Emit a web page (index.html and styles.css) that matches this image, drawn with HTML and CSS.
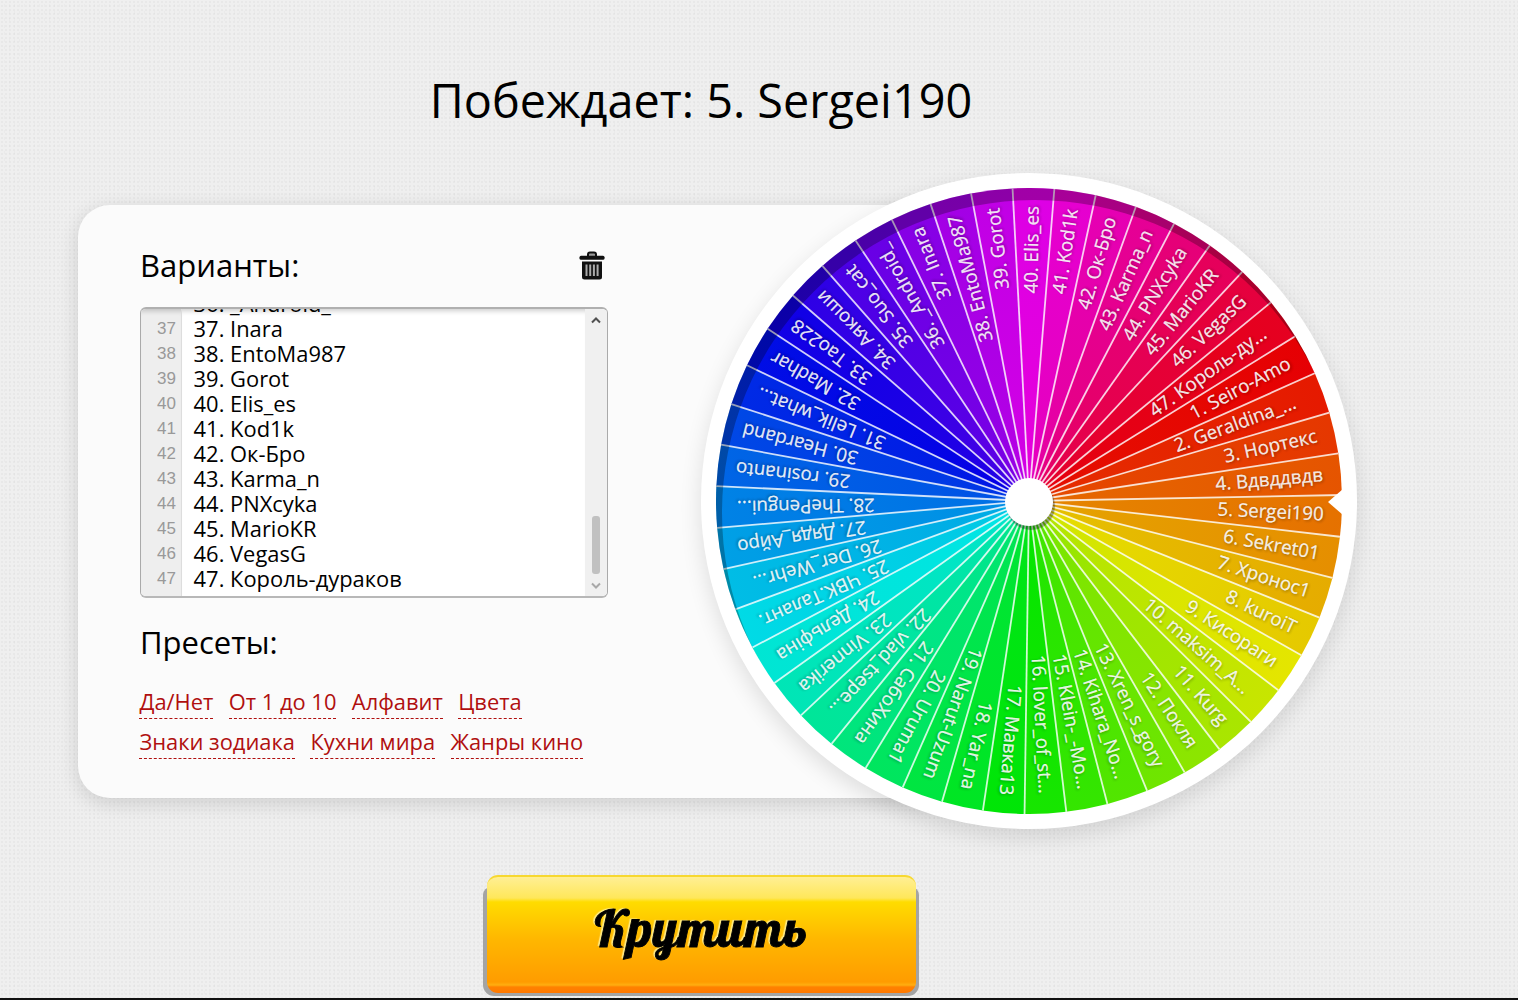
FILE: index.html
```html
<!DOCTYPE html>
<html lang="ru">

<head>
  <meta charset="utf-8">
  <title>Колесо фортуны</title>
  <link rel="stylesheet" href="styles.css">
</head>

<body>
  <div class="page">
    <h1 class="result">Побеждает: 5. Sergei190</h1>

    <div class="game">
      <div class="panel">
        <div class="panel-head">
          <h2>Варианты:</h2>
          <button class="trash-btn" title="Очистить">
            <svg width="26" height="29" viewBox="0 0 26 29">
              <path d="M9 5V3.500Q9 1.500 11 1.500h4q2 0 2 2V5" fill="#999" stroke="#111" stroke-width="2" />
              <rect x="0.500" y="4.800" width="25" height="4" rx="1.500" fill="#111" />
              <path d="M3 10.500h20V26q0 2.500-2.500 2.500h-15Q3 28.500 3 26z" fill="#111" />
              <path d="M7.500 13.500v11.500M11.200 13.500v11.500M14.900 13.500v11.500M18.600 13.500v11.500" stroke="#aaa" stroke-width="2" />
            </svg>
          </button>
        </div>

        <div class="editor">
          <div class="gutter" id="gutter"></div>
          <div class="lines" id="lines"></div>
          <div class="scrollbar">
            <svg width="12" height="8" viewBox="0 0 12 8"><path d="M2 6.500l4-4 4 4" fill="none" stroke="#505050" stroke-width="2" /></svg>
            <div class="thumb"></div>
            <svg width="12" height="8" viewBox="0 0 12 8"><path d="M2 1.500l4 4 4-4" fill="none" stroke="#a8a8a8" stroke-width="2" /></svg>
          </div>
        </div>

        <h2>Пресеты:</h2>
        <div class="presets">
          <div class="preset-row">
            <a class="preset">Да/Нет</a>
            <a class="preset">От 1 до 10</a>
            <a class="preset">Алфавит</a>
            <a class="preset">Цвета</a>
          </div>
          <div class="preset-row">
            <a class="preset">Знаки зодиака</a>
            <a class="preset">Кухни мира</a>
            <a class="preset">Жанры кино</a>
          </div>
        </div>
      </div>

      <div class="wheel">
        <svg id="wheel" width="626" height="626" viewBox="-313 -313 626 626"></svg>
        <div class="wheel-shade"></div>
        <div class="hub"></div>
        <div class="pointer"></div>
      </div>
    </div>

    <button class="spin-btn"><span>Крутить</span></button>
  </div>
  <div class="bottom-line"></div>

  <script src="script.js"></script>
</body>

</html>
```
FILE: styles.css
```css
* {
  box-sizing: border-box;
}

body {
  margin: 0;
  height: 1000px;
  overflow: hidden;
  display: flex;
  flex-direction: column;
  justify-content: space-between;
  background-color: #efefef;
  background-image:
    radial-gradient(rgba(0, 0, 0, 0.03) 0.8px, transparent 1px),
    radial-gradient(rgba(0, 0, 0, 0.02) 0.8px, transparent 1px);
  background-size: 4px 4px, 5px 7px;
  background-position: 0 0, 2px 2px;
  font-family: "Open Sans", "Noto Sans", sans-serif;
  color: #000;
}

.page {
  width: 1402px;
  height: 998px;
  display: flex;
  flex-direction: column;
}

.result {
  margin: 68px 0 0;
  height: 105px;
  line-height: 65px;
  font-size: 46.8px;
  font-weight: normal;
  text-align: center;
}

.game {
  display: flex;
  align-items: center;
  height: 656px;
  padding-left: 78px;
}

.panel {
  flex: none;
  width: 950px;
  height: 593px;
  padding: 39px 62px;
  border-radius: 32px;
  background-color: #fbfbfb;
  box-shadow: 0 5px 20px rgba(0, 0, 0, 0.14);
}

.panel-head {
  display: flex;
  justify-content: space-between;
  align-items: flex-start;
  width: 467px;
}

h2 {
  margin: 0;
  font-size: 31px;
  line-height: 42px;
  font-weight: normal;
}

.trash-btn {
  border: none;
  padding: 7px 2px 0 0;
  background: none;
}

.trash-btn svg {
  display: block;
}

.editor {
  display: flex;
  width: 468px;
  height: 291px;
  margin: 21px 0 23px;
  border: 1px solid #aaa;
  border-top: 2px solid #b0b0b0;
  border-bottom: 2px solid #b8b8b8;
  border-radius: 6px;
  overflow: hidden;
  background-color: #fff;
}

.gutter,
.lines {
  display: flex;
  flex-direction: column;
  justify-content: flex-end;
  padding-bottom: 5px;
  box-shadow: inset 0 6px 5px -4px rgba(0, 0, 0, 0.2);
}

.gutter {
  width: 41px;
  padding-right: 5px;
  border-right: 1px solid #ddd;
  background-color: #eee;
  color: #999;
  font-family: "Liberation Sans", Arial, sans-serif;
  font-size: 17px;
  text-align: right;
}

.gutter div,
.lines div {
  flex: none;
  height: 25px;
  line-height: 25px;
}

.lines {
  flex: 1;
  padding-left: 11.6px;
  font-size: 21.9px;
}

.scrollbar {
  display: flex;
  flex-direction: column;
  align-items: center;
  width: 22px;
  padding: 7px 0 6px;
  background-color: #f0f0f0;
}

.thumb {
  width: 8px;
  height: 58px;
  margin: auto 0 8px;
  border-radius: 3px;
  background-color: #c1c1c1;
}

.presets {
  margin-top: 23px;
}

.preset-row {
  display: flex;
  gap: 15.4px;
  height: 40px;
  margin-left: -0.6px;
}

.preset {
  height: 33px;
  line-height: 31px;
  font-size: 21.9px;
  color: #b00f0f;
  border-bottom: 1px dashed #b00f0f;
  white-space: nowrap;
}

.wheel {
  position: relative;
  flex: none;
  width: 656px;
  height: 656px;
  margin-left: -327px;
  padding: 15px;
  border-radius: 50%;
  background-color: #fff;
  box-shadow: 0 8px 22px rgba(0, 0, 0, 0.12);
}

.wheel svg {
  display: block;
}

.sector-label {
  fill: #fff;
  fill-opacity: 0.93;
  stroke: #fff;
  stroke-width: 0.2;
  font-size: 18.7px;
  font-weight: 500;
  text-anchor: end;
  text-shadow: 1px 1px 3px rgba(0, 0, 0, 0.3);
}

.sector-line {
  stroke: #fff;
  stroke-opacity: 0.8;
  stroke-width: 1.8;
}

.wheel-shade {
  position: absolute;
  top: 15px;
  left: 15px;
  width: 626px;
  height: 626px;
  border-radius: 50%;
  box-shadow: inset 6px 12px 0 rgba(0, 0, 0, 0.27);
}

.hub {
  position: absolute;
  top: 305px;
  left: 304px;
  width: 48px;
  height: 48px;
  border-radius: 50%;
  background-color: #fff;
  box-shadow: 2px 4px 1px rgba(0, 0, 0, 0.35);
}

.pointer {
  position: absolute;
  top: 316px;
  right: 14px;
  width: 15px;
  height: 26px;
  background-color: #fff;
  clip-path: polygon(0 50%, 100% 0, 100% 100%);
}

.spin-btn {
  position: relative;
  align-self: center;
  width: 436px;
  height: 121px;
  margin-top: 46px;
  padding: 0 3px 3px 4px;
  border: none;
  background: none;
}

/* grey base under the button */
.spin-btn::before {
  content: "";
  position: absolute;
  inset: 12px 0 0;
  border-radius: 8px 8px 11px 11px;
  background-color: #a4a4a4;
}

.spin-btn span {
  position: relative;
  display: block;
  height: 118px;
  line-height: 101px;
  border-radius: 11px;
  border-top: 2px solid #f7d830;
  background: linear-gradient(#ffef94 0, #ffe75a 21px, #ffdc00 25px, #ffb700 62px, #ff9c00 105px, #ffae10 108px, #ff8200 110px, #ff7800 100%);
  color: #000;
  font-family: Lobster, "Liberation Serif", serif;
  font-size: 51.5px;
  font-weight: normal;
  letter-spacing: 0.8px;
  -webkit-text-stroke: 0.9px #000;
  text-shadow: -2px -1px 1px rgba(255, 240, 150, 0.9);
}

.bottom-line {
  height: 2px;
  background-color: #111;
}
```
FILE: script.js
```js
var names = [
  'Seiro-Amo', 'Geraldina_...', 'Нортекс', 'Вдвддвдв', 'Sergei190', 'Sekret01', 'Хронос1', 'kuroiT',
  'Кисораги', 'maksim_A...', 'Kurg', 'Покля', 'Xren_s_gory', 'Kihara_No...', 'Klein-_-Mo...', 'lover_of_st...',
  'Мавка13', 'Yar_na', 'Narut-Uzum', 'Uruma1', 'СабоХина', 'vlad_tsepe...', 'Vinnerika', 'Дельфіна',
  'ЧВК.Талант.', 'Der_Wehr...', 'Дядя_Айро', 'ThePengui...', 'rosinanto', 'Heardand', 'Lelik_what...', 'Madhar',
  'Tao228', 'Аякоши', 'Suo_cat', '_Android_', 'Inara', 'EntoMa987', 'Gorot', 'Elis_es',
  'Kod1k', 'Ок-Бро', 'Karma_n', 'PNXcyka', 'MarioKR', 'VegasG', 'Король-ду...'
];
// cut names end a bit closer to the centre
var labelEnd = { 1: 284, 9: 289, 13: 292, 14: 293, 15: 293, 21: 288, 25: 287, 27: 292, 30: 292, 46: 290 };
var radius = 313;
var step = 360 / names.length;
var offset = -1.1 - 4 * step;

function point(angle, r) {
  var a = angle * Math.PI / 180;
  return (Math.cos(a) * r).toFixed(2) + ' ' + (Math.sin(a) * r).toFixed(2);
}

function drawWheel() {
  var defs = '', sectors = '', lines = '', labels = '';
  names.forEach(function (name, i) {
    var start = offset + i * step;
    var hue = i * step;
    defs += '<radialGradient id="g' + i + '" gradientUnits="userSpaceOnUse" cx="0" cy="0" r="' + radius + '">' +
      '<stop offset="0.1" stop-color="hsl(' + (hue + 4) + ',100%,45%)"/>' +
      '<stop offset="1" stop-color="hsl(' + (hue - 1) + ',100%,45%)"/></radialGradient>';
    sectors += '<path fill="url(#g' + i + ')" d="M0 0L' + point(start, radius) +
      'A' + radius + ' ' + radius + ' 0 0 1 ' + point(start + step + 0.1, radius) + 'Z"/>';
    lines += '<path class="sector-line" d="M0 0L' + point(start, radius) + '"/>';
    labels += '<text class="sector-label" x="' + (labelEnd[i] || 295) + '" y="5.5" transform="rotate(' + (start + step / 2) + ')">' +
      (i + 1) + '. ' + name + '</text>';
  });
  document.getElementById('wheel').innerHTML = '<defs>' + defs + '</defs>' + sectors + lines + labels;
}

function fillEditor() {
  var gutter = '', lines = '';
  for (var i = 35; i < names.length; i++) {
    var name = i == 46 ? 'Король-дураков' : names[i];
    gutter += '<div>' + (i + 1) + '</div>';
    lines += '<div>' + (i + 1) + '. ' + name + '</div>';
  }
  document.getElementById('gutter').innerHTML = gutter;
  document.getElementById('lines').innerHTML = lines;
}

drawWheel();
fillEditor();
```
